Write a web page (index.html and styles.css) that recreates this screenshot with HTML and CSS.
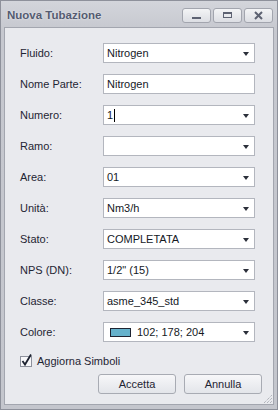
FILE: index.html
```html
<!DOCTYPE html>
<html lang="it">
    <head>
        <meta charset="UTF-8" />
        <title>Nuova Tubazione</title>
        <link rel="stylesheet" href="styles.css">
    </head>
    <body>
        <div class="window">
            <!-- barra titolo -->
            <div class="titlebar">
                <span class="title">Nuova Tubazione</span>
                <div class="tbtns">
                    <button class="tbtn">
                        <svg width="11" height="9" viewBox="0 0 11 9"><rect x="1" y="6" width="9" height="2" fill="#5d6272"/></svg>
                    </button>
                    <button class="tbtn">
                        <svg width="11" height="9" viewBox="0 0 11 9"><rect x="1.5" y="1.5" width="8" height="5" fill="none" stroke="#5d6272" stroke-width="1"/><rect x="1" y="1" width="9" height="2" fill="#5d6272"/></svg>
                    </button>
                    <button class="tbtn">
                        <svg width="11" height="9" viewBox="0 0 11 9"><path d="M2 1 L9 8 M9 1 L2 8" stroke="#5d6272" stroke-width="2"/></svg>
                    </button>
                </div>
            </div>

            <!-- pannello form -->
            <div class="panel">
                <div class="form">
                    <label>Fluido:</label>
                    <div class="field combo">Nitrogen<i class="arrow"></i></div>

                    <label>Nome Parte:</label>
                    <div class="field">Nitrogen</div>

                    <label>Numero:</label>
                    <div class="field combo">1<span class="caret"></span><i class="arrow"></i></div>

                    <label>Ramo:</label>
                    <div class="field combo"><i class="arrow"></i></div>

                    <label>Area:</label>
                    <div class="field combo">01<i class="arrow"></i></div>

                    <label>Unità:</label>
                    <div class="field combo">Nm3/h<i class="arrow"></i></div>

                    <label>Stato:</label>
                    <div class="field combo">COMPLETATA<i class="arrow"></i></div>

                    <label>NPS (DN):</label>
                    <div class="field combo">1/2" (15)<i class="arrow"></i></div>

                    <label>Classe:</label>
                    <div class="field combo">asme_345_std<i class="arrow"></i></div>

                    <label>Colore:</label>
                    <div class="field combo"><span class="swatch"></span>102; 178; 204<i class="arrow"></i></div>
                </div>

                <div class="check">
                    <svg width="14" height="14" viewBox="0 0 14 14">
                        <rect x="0.5" y="3.5" width="11" height="10" fill="#f7f7f9" stroke="#8d919c"/>
                        <path d="M2.5 8 L5 11.5 L11 1.5" fill="none" stroke="#1d2230" stroke-width="1.8"/>
                    </svg>
                    <span>Aggiorna Simboli</span>
                </div>

                <div class="actions">
                    <button class="btn">Accetta</button>
                    <button class="btn">Annulla</button>
                </div>

                <!-- maniglia ridimensiona -->
                <svg class="grip" width="10" height="8" viewBox="0 0 10 8">
                    <path d="M2 8 L10 0 M5 8 L10 3 M8 8 L10 6" stroke="#9a9da6" stroke-width="1" stroke-dasharray="1 1"/>
                </svg>
            </div>
        </div>
    </body>
</html>
```

FILE: styles.css
```css
* {
    box-sizing: border-box;
}

body {
    margin: 0;
    font-family: "Liberation Sans", Arial, sans-serif;
    font-size: 11px;
    color: #1f2533;
}

/* finestra */
.window {
    width: 278px;
    height: 410px;
    border: 1px solid #8e919b;
    background: linear-gradient(to bottom, #d3d5db, #c6c8cf 30px, #c4c6cd);
    display: flex;
    flex-direction: column;
}

.titlebar {
    height: 26px;
    display: flex;
    align-items: center;
    justify-content: space-between;
    padding: 0 4px 0 6px;
}

.title {
    font-weight: bold;
    font-size: 11.5px;
    color: #545b70;
    text-shadow: 0 0 2px #eef0f4;
    padding-top: 2px;
}

.tbtns {
    display: flex;
    gap: 2px;
    padding-top: 2px;
}

.tbtn {
    width: 29px;
    height: 15px;
    padding: 0;
    border: 1px solid #a2a5ae;
    border-radius: 3px;
    background: linear-gradient(to bottom, #f3f4f6, #dcdee3);
    display: flex;
    align-items: center;
    justify-content: center;
}

/* pannello */
.panel {
    position: relative;
    flex: 1;
    margin: 0 3px 4px 3px;
    border: 1px solid #a3a6af;
    background: #e9eaee;
    padding: 15px 11px 0 15px;
}

.form {
    display: grid;
    grid-template-columns: 83px 152px;
    grid-auto-rows: 20px;
    row-gap: 11px;
    align-items: center;
}

.form label {
    color: #1f2533;
}

.field {
    position: relative;
    height: 20px;
    border: 1px solid #b3b6be;
    background: #fff;
    display: flex;
    align-items: center;
    padding-left: 3px;
    color: #15191f;
}

.arrow {
    position: absolute;
    right: 5px;
    top: 8px;
    width: 0;
    height: 0;
    border-left: 3px solid transparent;
    border-right: 3px solid transparent;
    border-top: 4px solid #2b2f3a;
}

.caret {
    display: inline-block;
    width: 1px;
    height: 13px;
    margin-left: 1px;
    background: #000;
}

.swatch {
    width: 21px;
    height: 9px;
    margin: 0 6px 0 3px;
    border: 1px solid #1e2433;
    background: #66b2cc;
}

/* casella spunta */
.check {
    display: flex;
    align-items: flex-end;
    gap: 3px;
    margin-top: 11px;
    height: 14px;
}

.check span {
    line-height: 12px;
}

/* pulsanti */
.actions {
    display: flex;
    justify-content: flex-end;
    gap: 8px;
    margin-top: 7px;
}

.btn {
    width: 78px;
    height: 20px;
    border: 1px solid #a8abb3;
    border-radius: 3px;
    background: linear-gradient(to bottom, #f7f7f9, #e3e5ea);
    font-family: "Liberation Sans", Arial, sans-serif;
    font-size: 11px;
    color: #1f2533;
    padding: 0;
}

.grip {
    position: absolute;
    right: 1px;
    bottom: 1px;
}
```
